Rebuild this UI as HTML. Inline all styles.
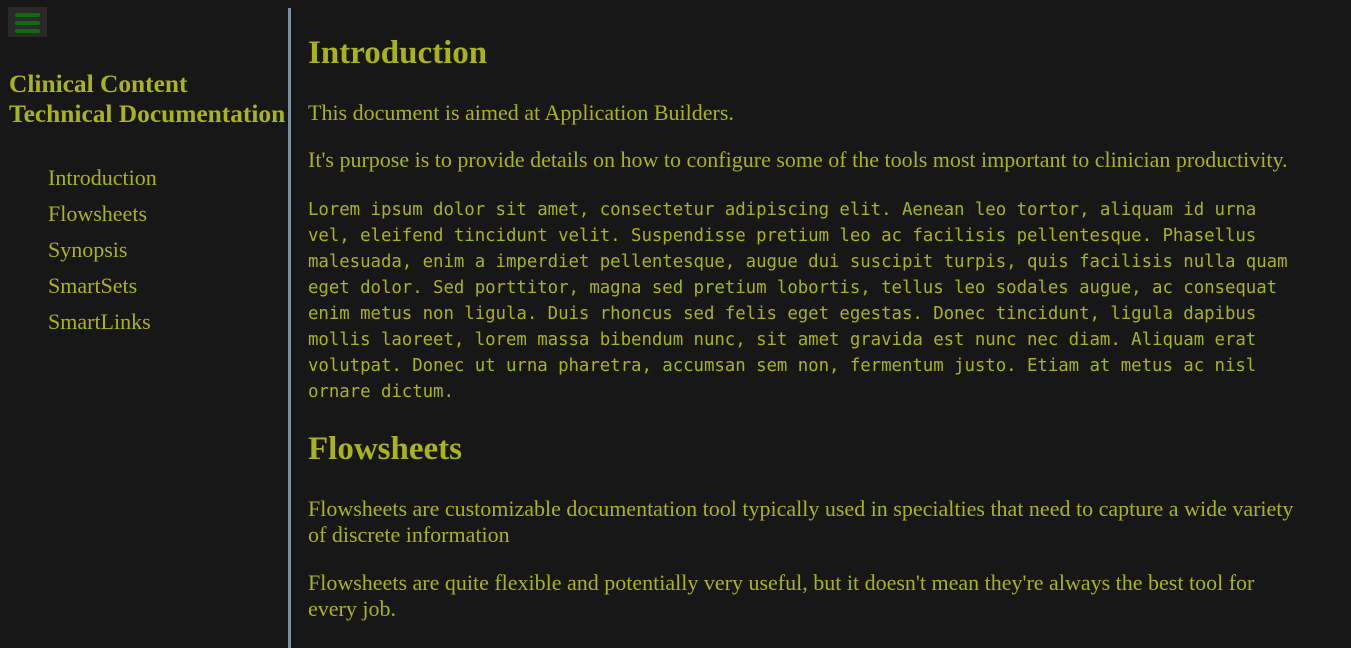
<!DOCTYPE html>
<html><head><meta charset="utf-8"><style>
html,body{margin:0;padding:0;background:#181717;color:#a9b31c;width:1351px;height:641px;overflow:hidden;font-family:"Liberation Serif",serif}
.btn{position:absolute;left:8px;top:7px;width:39px;height:30px;background:#2b2a28}
.btn i{position:absolute;left:7px;width:25px;height:4px;border-radius:2px;background:#0a6e0a}
.side{position:absolute;left:0;top:8px;width:288px;height:640px;border-right:3px solid #7d8ea0}
.title{position:absolute;left:9px;top:69px;font-size:25.4px;font-weight:bold;line-height:30px;white-space:nowrap}
.nav{position:absolute;left:48px;top:160px;font-size:22px;line-height:36px}
.main{position:absolute;left:308px;top:0;width:1000px}
h2{position:absolute;margin:0;font-size:33px;font-weight:bold;white-space:nowrap}
p{position:absolute;margin:0;font-size:22px;line-height:26px;width:1000px}
pre{position:absolute;margin:0;font-family:"DejaVu Sans Mono","Liberation Mono",monospace;font-size:17.4px;line-height:26px;white-space:pre;letter-spacing:-0.05px}
</style></head><body>
<div class="btn"><i style="top:6px"></i><i style="top:14px"></i><i style="top:22px"></i></div>
<div class="side"></div>
<div class="title">Clinical Content<br>Technical Documentation</div>
<div class="nav">Introduction<br>Flowsheets<br>Synopsis<br>SmartSets<br>SmartLinks</div>
<div class="main">
<h2 style="top:35px">Introduction</h2>
<p style="top:100px">This document is aimed at Application Builders.</p>
<p style="top:147px">It's purpose is to provide details on how to configure some of the tools most important to clinician productivity.</p>
<pre style="top:197px">Lorem ipsum dolor sit amet, consectetur adipiscing elit. Aenean leo tortor, aliquam id urna
vel, eleifend tincidunt velit. Suspendisse pretium leo ac facilisis pellentesque. Phasellus
malesuada, enim a imperdiet pellentesque, augue dui suscipit turpis, quis facilisis nulla quam
eget dolor. Sed porttitor, magna sed pretium lobortis, tellus leo sodales augue, ac consequat
enim metus non ligula. Duis rhoncus sed felis eget egestas. Donec tincidunt, ligula dapibus
mollis laoreet, lorem massa bibendum nunc, sit amet gravida est nunc nec diam. Aliquam erat
volutpat. Donec ut urna pharetra, accumsan sem non, fermentum justo. Etiam at metus ac nisl
ornare dictum.</pre>
<h2 style="top:431px">Flowsheets</h2>
<p style="top:496px">Flowsheets are customizable documentation tool typically used in specialties that need to capture a wide variety of discrete information</p>
<p style="top:570px">Flowsheets are quite flexible and potentially very useful, but it doesn't mean they're always the best tool for every job.</p>
</div>
</body></html>
